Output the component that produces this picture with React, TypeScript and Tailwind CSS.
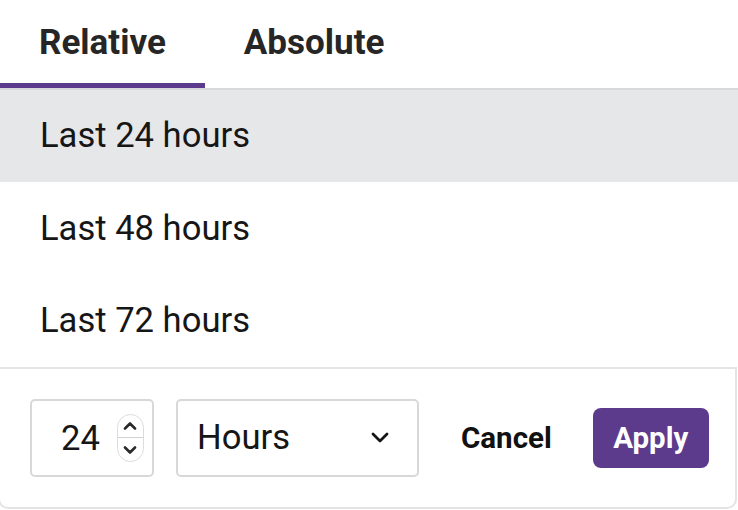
import React, { useState } from 'react';

const options = ['Last 24 hours', 'Last 48 hours', 'Last 72 hours'];

const Chevron: React.FC<{ dir: 'up' | 'down'; className?: string }> = ({ dir, className }) => (
  <svg viewBox="0 0 14 8" className={className} fill="none" stroke="currentColor" strokeWidth={2.6} strokeLinecap="round" strokeLinejoin="round">
    {dir === 'up' ? <path d="M2 6.5 L7 1.5 L12 6.5" /> : <path d="M2 1.5 L7 6.5 L12 1.5" />}
  </svg>
);

export default function App() {
  const [tab, setTab] = useState<'relative' | 'absolute'>('relative');
  const [selected, setSelected] = useState(0);
  const [amount] = useState(24);

  return (
    <div className="w-[738px] h-[510px] bg-white overflow-hidden" style={{ fontFamily: 'Roboto, "Liberation Sans", sans-serif' }}>
      {/* Tabs */}
      <div className="flex h-[90px] border-b-2 border-[#d9d9db]">
        {(['relative', 'absolute'] as const).map(t => (
          <button
            key={t}
            onClick={() => setTab(t)}
            className={`h-[88px] px-[39px] pt-[3px] flex items-center text-[35px] font-bold text-[#262626] border-b-[5px] ${tab === t ? 'border-[#5c3b8d]' : 'border-transparent'}`}
          >
            {t === 'relative' ? 'Relative' : 'Absolute'}
          </button>
        ))}
      </div>

      {/* Options */}
      <div className="flex flex-col">
        {options.map((o, i) => (
          <div
            key={o}
            onClick={() => setSelected(i)}
            className={`h-[92.33px] flex items-center pl-[40px] text-[34.6px] text-[#161616] cursor-pointer ${selected === i ? 'bg-[#e6e7e9]' : 'bg-white'}`}
          >
            {o}
          </div>
        ))}
      </div>

      {/* Footer */}
      <div className="-ml-[2px] w-[739px] h-[142px] border-2 border-[#e4e4e6] rounded-b-[10px] flex items-center pl-[30px]">
        <div className="w-[124px] h-[78px] border-2 border-[#d8d8d8] rounded-[5px] flex items-center pl-[29px]">
          <span className="text-[34.6px] text-[#161616] leading-none">{amount}</span>
          <div className="ml-[17px] w-[27px] h-[48px] border border-[#dcdcdc] rounded-full flex flex-col text-[#2a2a2a] overflow-hidden">
            <div className="flex-1 flex items-center justify-center border-b border-[#d2d2d2]">
              <Chevron dir="up" className="w-[14px] h-[8px]" />
            </div>
            <div className="flex-1 flex items-center justify-center">
              <Chevron dir="down" className="w-[14px] h-[8px]" />
            </div>
          </div>
        </div>

        <div className="ml-[22px] w-[243px] h-[78px] border-2 border-[#d8d8d8] rounded-[5px] flex items-center justify-between pl-[19px] pr-[28px]">
          <span className="text-[34.6px] text-[#161616]">Hours</span>
          <svg viewBox="0 0 18 11" className="w-[18px] h-[11px] text-[#161616]" fill="none" stroke="currentColor" strokeWidth={2.8} strokeLinecap="round" strokeLinejoin="round">
            <path d="M2 2 L9 9 L16 2" />
          </svg>
        </div>

        <button className="ml-[42px] text-[29.5px] font-bold text-[#111]">Cancel</button>

        <button className="ml-[41px] w-[116px] h-[60px] rounded-[8px] bg-[#5c3b8d] text-white text-[29.5px] font-bold flex items-center justify-center">
          Apply
        </button>
      </div>
    </div>
  );
}
